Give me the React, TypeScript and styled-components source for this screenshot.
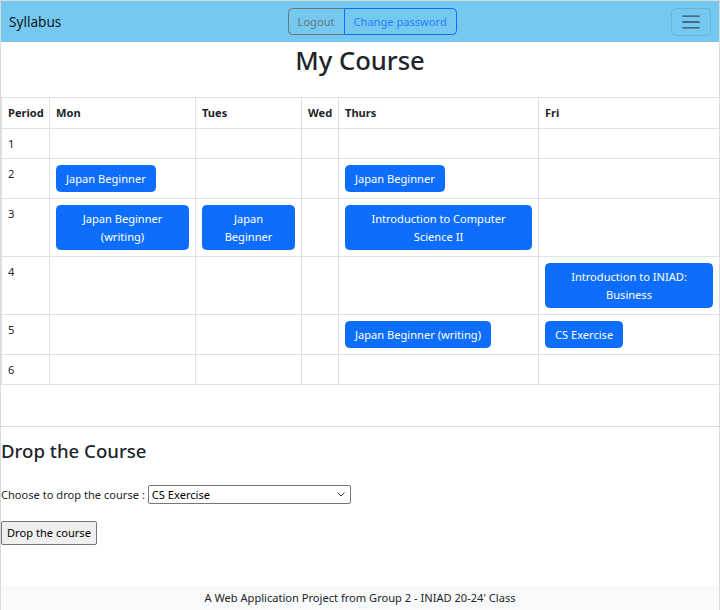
import React from 'react';
import styled, {createGlobalStyle} from 'styled-components';

type Cell = string | null;

interface Row {
    period: number;
    cells: Cell[];
}

const days = ['Mon', 'Tues', 'Wed', 'Thurs', 'Fri'];
const colWidths = [48, 146, 106, 37, 200, 181];

const rows: Row[] = [
    {period: 1, cells: [null, null, null, null, null]},
    {period: 2, cells: ['Japan Beginner', null, null, 'Japan Beginner', null]},
    {period: 3, cells: ['Japan Beginner (writing)', 'Japan Beginner', null, 'Introduction to Computer Science II', null]},
    {period: 4, cells: [null, null, null, null, 'Introduction to INIAD: Business']},
    {period: 5, cells: [null, null, null, 'Japan Beginner (writing)', 'CS Exercise']},
    {period: 6, cells: [null, null, null, null, null]},
];

const courses = ['CS Exercise', 'Japan Beginner', 'Japan Beginner (writing)', 'Introduction to Computer Science II', 'Introduction to INIAD: Business'];

const GlobalStyle = createGlobalStyle`
    * { box-sizing: border-box; }
    body {
        margin: 0;
        font-family: "Noto Sans", "Open Sans", sans-serif;
        font-size: 11.1px;
        line-height: 18px;
        color: #212529;
        background: #fff;
    }
`;

function App() {
    return(
        <Page>
            <GlobalStyle/>
            <Navbar>
                <Brand>Syllabus</Brand>
                <BtnGroup>
                    <OutlineBtn tone='secondary'>Logout</OutlineBtn>
                    <OutlineBtn tone='primary'>Change password</OutlineBtn>
                </BtnGroup>
                <Toggler aria-label='menu'>
                    <svg width='22' height='22' viewBox='0 0 30 30'>
                        <path d='M4 7h22M4 15h22M4 23h22' stroke='rgba(33,37,41,0.75)' strokeWidth='2' strokeLinecap='round'/>
                    </svg>
                </Toggler>
            </Navbar>

            <Main>
                <Title>My Course</Title>

                <Table>
                    <colgroup>
                        {colWidths.map((w, i) => <col key={i} style={{width: w}}/>)}
                    </colgroup>
                    <thead>
                        <tr>
                            <Th>Period</Th>
                            {days.map((d) => <Th key={d}>{d}</Th>)}
                        </tr>
                    </thead>
                    <tbody>
                        {
                            rows.map((row) => (
                                <tr key={row.period}>
                                    <Td>{row.period}</Td>
                                    {
                                        row.cells.map((c, i) => (
                                            <Td key={i}>
                                                {c && <CourseBtn>{c}</CourseBtn>}
                                            </Td>
                                        ))
                                    }
                                </tr>
                            ))
                        }
                    </tbody>
                </Table>

                <Divider/>

                <SubTitle>Drop the Course</SubTitle>
                <FormRow>
                    Choose to drop the course :
                    <SelectWrap>
                        <Select defaultValue='CS Exercise'>
                            {courses.map((c) => <option key={c}>{c}</option>)}
                        </Select>
                        <Chevron width='8' height='5' viewBox='0 0 8 5'>
                            <path d='M0.5 0.5L4 4L7.5 0.5' fill='none' stroke='#333' strokeWidth='1'/>
                        </Chevron>
                    </SelectWrap>
                </FormRow>
                <DropBtn>Drop the course</DropBtn>
            </Main>

            <Footer>A Web Application Project from Group 2 - INIAD 20-24' Class</Footer>
        </Page>
    )
}

const Page = styled.div`
    width: 720px;
    height: 610px;
    border: 1px solid #dadada;
    border-bottom: none;
    display: flex;
    flex-direction: column;
    overflow: hidden;
`

const Navbar = styled.nav`
    height: 41px;
    flex-shrink: 0;
    background-color: #75c8f0;
    display: flex;
    align-items: center;
    padding: 0 8px 0 8px;
`

const Brand = styled.a`
    font-size: 13.6px;
    color: rgba(0, 0, 0, 0.9);
    margin-right: 12px;
    line-height: 22px;
`

const BtnGroup = styled.div`
    display: flex;
    margin: 0 auto;
`

const OutlineBtn = styled.button<{tone: 'primary' | 'secondary'}>`
    font-family: inherit;
    font-size: 11.1px;
    line-height: 18px;
    padding: 3.5px 9px;
    background: transparent;
    color: ${props => props.tone === 'primary' ? '#2a7ffb' : '#6c757d'};
    border: 1px solid ${props => props.tone === 'primary' ? '#0d6efd' : '#6c757d'};
    border-radius: ${props => props.tone === 'primary' ? '0 4.5px 4.5px 0' : '4.5px 0 0 4.5px'};
    margin-left: ${props => props.tone === 'primary' ? '-1px' : '0'};
`

const Toggler = styled.button`
    width: 40px;
    height: 28px;
    display: flex;
    align-items: center;
    justify-content: center;
    padding: 0;
    background: transparent;
    border: 1px solid rgba(0, 0, 0, 0.1);
    border-radius: 4.5px;
`

const Main = styled.main`
    flex: 1;
    display: flex;
    flex-direction: column;
    align-items: flex-start;
`

const Title = styled.h1`
    align-self: stretch;
    text-align: center;
    font-size: 25.6px;
    font-weight: 500;
    line-height: 33px;
    margin: 2px 0 20px;
`

const Table = styled.table`
    width: 100%;
    table-layout: fixed;
    border-collapse: collapse;
    border: 1px solid #dee2e6;
`

const Th = styled.th`
    text-align: left;
    font-weight: 700;
    line-height: 17px;
    padding: 6px 6px 7px;
    border: 1px solid #dee2e6;
    vertical-align: top;
`

const Td = styled.td`
    line-height: 17px;
    padding: 6px;
    border: 1px solid #dee2e6;
    vertical-align: top;
`

const CourseBtn = styled.button`
    display: inline-block;
    vertical-align: top;
    max-width: 100%;
    font-family: inherit;
    font-size: 11.1px;
    line-height: 18px;
    padding: 3.5px 9px;
    color: #fff;
    background-color: #0d6efd;
    border: 1px solid #0d6efd;
    border-radius: 4.5px;
    text-align: center;
`

const Divider = styled.hr`
    align-self: stretch;
    border: none;
    border-top: 1px solid #dcdcdc;
    margin: 41px 0 0;
`

const SubTitle = styled.h3`
    font-size: 18.6px;
    font-weight: 500;
    line-height: 24px;
    margin: 12px 0 22px;
`

const FormRow = styled.label`
    display: flex;
    align-items: center;
    gap: 3px;
    line-height: 18px;
    margin-bottom: 17px;
`

const SelectWrap = styled.span`
    position: relative;
    display: inline-flex;
`

const Select = styled.select`
    appearance: none;
    width: 203px;
    height: 19px;
    font-family: inherit;
    font-size: 11.1px;
    line-height: 17px;
    padding: 0 16px 0 3px;
    border: 1px solid #767676;
    border-radius: 2px;
    background: #fff;
    color: #000;
`

const Chevron = styled.svg`
    position: absolute;
    right: 6px;
    top: 7px;
    pointer-events: none;
`

const DropBtn = styled.button`
    font-family: inherit;
    font-size: 11.1px;
    line-height: 18px;
    padding: 2px 5px;
    background: #efefef;
    border: 1px solid #767676;
    border-radius: 2px;
    color: #000;
`

const Footer = styled.footer`
    height: 24px;
    flex-shrink: 0;
    background-color: #f8f9fa;
    text-align: center;
    line-height: 24px;
`

export default App;
